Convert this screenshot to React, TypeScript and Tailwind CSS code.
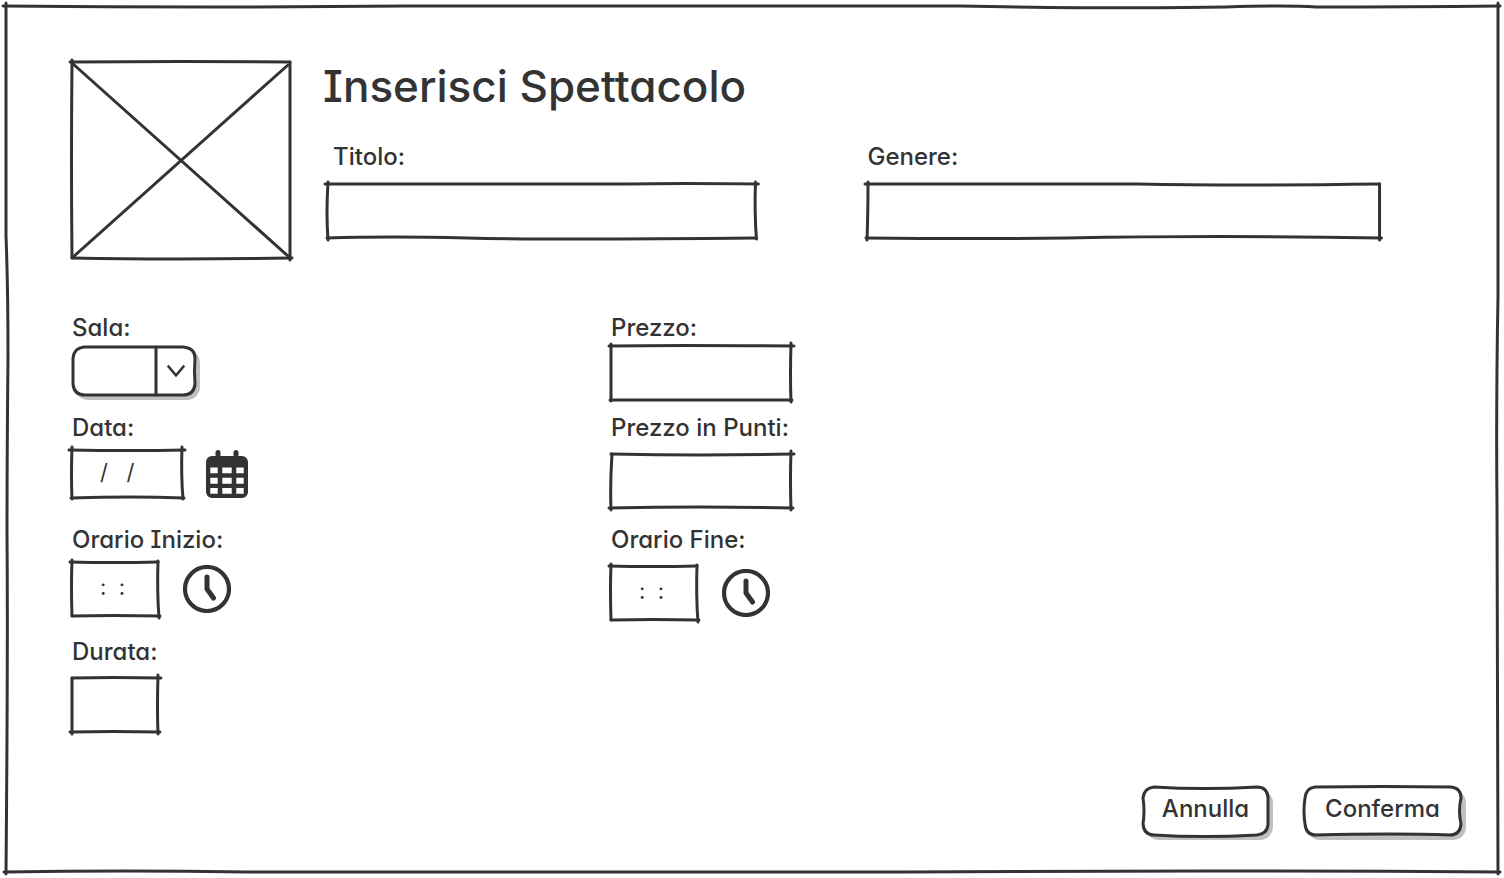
import React from "react";

const INK = "stroke-[#333333]";

function Sketch({ w, h, lines }: { w: number; h: number; lines: string[] }) {
  return (
    <svg
      aria-hidden="true"
      viewBox={`0 0 ${w} ${h}`}
      preserveAspectRatio="none"
      className={`pointer-events-none absolute inset-0 h-full w-full overflow-visible fill-none ${INK} stroke-3`}
      strokeLinecap="round"
      strokeLinejoin="round"
    >
      {lines.map((d) => (
        <path key={d} d={d} vectorEffect="non-scaling-stroke" />
      ))}
    </svg>
  );
}

type FieldProps = {
  id: string;
  label: string;
  w: number;
  h: number;
  lines: string[];
  box: string;
  gap: string;
  labelClass?: string;
  inputClass?: string;
  value?: string;
  children?: React.ReactNode;
};

function Field({ id, label, w, h, lines, box, gap, labelClass = "", inputClass = "px-3 text-2xl", value, children }: FieldProps) {
  return (
    <div>
      <label htmlFor={id} className={`block text-2xl leading-8 font-medium ${labelClass}`}>
        {label}
      </label>
      <div className={`flex items-center gap-6 ${gap}`}>
        <div className={`relative ${box}`}>
          <input id={id} type="text" defaultValue={value} className={`block h-full w-full bg-transparent outline-none ${inputClass}`} />
          <Sketch w={w} h={h} lines={lines} />
        </div>
        {children}
      </div>
    </div>
  );
}

function Clock() {
  return (
    <svg aria-hidden="true" viewBox="0 0 48 48" className={`size-12 fill-none ${INK}`} strokeLinecap="round" strokeLinejoin="round">
      <circle cx="24" cy="24" r="22" strokeWidth="4.2" />
      <path d="M24 12V24L30.5 33" strokeWidth="5" />
    </svg>
  );
}

function Calendar() {
  return (
    <svg aria-hidden="true" viewBox="0 0 42 48" className="h-12 w-[42px] fill-[#333333]">
      <rect x="9.5" y="0" width="5" height="10" rx="2.5" />
      <rect x="27.5" y="0" width="5" height="10" rx="2.5" />
      <path
        fillRule="evenodd"
        d="M6 6H36A6 6 0 0 1 42 12V42A6 6 0 0 1 36 48H6A6 6 0 0 1 0 42V12A6 6 0 0 1 6 6ZM4.300 17.500V23.300H11.700V17.500ZM16.300 17.500V23.300H25.700V17.500ZM30.300 17.500V23.300H37.700V17.500ZM4.300 27.700V33.700H11.700V27.700ZM16.300 27.700V33.700H25.700V27.700ZM30.300 27.700V33.700H37.700V27.700ZM4.300 38V43.700H11.700V38ZM16.300 38V43.700H25.700V38ZM30.300 38V43.700H37.700V38Z"
      />
    </svg>
  );
}

function SketchButton({ w, width, d, children }: { w: number; width: string; d: string; children: string }) {
  return (
    <button type="button" className={`relative h-12 rounded-xl bg-white pb-1 text-2xl leading-8 font-medium shadow-[4px_4px_0_1px_#c0c0c0] ${width}`}>
      <Sketch w={w} h={48} lines={[d]} />
      {children}
    </button>
  );
}

const timeLines = ["M-2 0Q40 1 86 0", "M86 -1Q85 30 87 56", "M0 -2Q-1 24 0 54", "M0 54Q40 53 88 54"];

export default function App() {
  return (
    <div className="flex min-h-screen bg-white p-[6px] font-['Inter',sans-serif] text-[#333333] [font-feature-settings:'cv11','cv08']">
      <main className="relative flex flex-1 flex-col pt-14 pr-[37px] pb-[37px] pl-[66px]">
        <Sketch
          w={1492}
          h={866}
          lines={[
            "M-3 0Q200 2 400 0H955Q1120 3 1220 1Q1280 -1 1310 1Q1400 1 1494 0",
            "M0 -3V230Q2 280 2 350Q1 450 1 530Q2 640 0 868",
            "M1492 -3V290Q1490 400 1491 500Q1492 600 1492 868",
            "M-2 866Q120 864 240 866H900Q1200 864 1494 866",
          ]}
        />
        <form className="flex flex-1 flex-col">
          <header className="flex gap-8 pr-[81px]">
            <div className="relative h-[196px] w-[219px] shrink-0" role="img" aria-label="Locandina">
              <Sketch
                w={219}
                h={196}
                lines={["M-2 0Q110 -1 218 0", "M218 0V198", "M0 -2Q-1 100 0 196", "M0 196Q100 198 220 196", "M0 1L216 194", "M216 3L1 195"]}
              />
            </div>
            <div className="flex-1">
              <h1 className="text-[44px] leading-12 font-medium">Inserisci Spettacolo</h1>
              <div className="mt-[31px] grid grid-cols-[429fr_512fr] gap-x-[111px] pl-1">
                <Field
                  id="titolo" label="Titolo:" w={429} h={54} box="h-[54px] w-full" gap="mt-[11px]" labelClass="pl-[6px]"
                  lines={["M-2 0H300Q350 -1 431 0", "M428 -2Q427 30 429 55", "M1 -2Q-1 30 1 56", "M0 54Q60 52 140 54T429 54"]}
                />
                <Field
                  id="genere" label="Genere:" w={512} h={54} box="h-[54px] w-full" gap="mt-[11px]"
                  lines={["M-2 0H270Q370 2 512 0", "M512 0V56", "M1 -2Q1 30 0 56", "M-1 54Q110 55 200 54Q350 51 514 54"]}
                />
              </div>
            </div>
          </header>
          <div className="mt-[54px] grid grid-cols-[539fr_850fr] grid-rows-[100px_112px_112px_auto]">
            <div>
              <label htmlFor="sala" className="block text-2xl leading-8 font-medium">Sala:</label>
              <div className="relative mt-[3px] h-12 w-[123px] rounded-xl bg-white shadow-[4px_4px_0_1px_#c0c0c0]">
                <select id="sala" className="block h-full w-full appearance-none rounded-xl bg-transparent px-3 outline-none">
                  <option />
                </select>
                <Sketch
                  w={123}
                  h={48}
                  lines={["M12 0H111Q123 1 123 11Q122 24 123 37Q122 48 111 48H13Q2 48 1 37V11Q2 1 12 0Z", "M84 0V48"]}
                />
                <svg
                  aria-hidden="true"
                  viewBox="0 0 18 12"
                  className={`pointer-events-none absolute top-[18px] right-[10px] h-3 w-[18px] fill-none ${INK}`}
                  strokeWidth="2.6"
                  strokeLinecap="round"
                  strokeLinejoin="round"
                >
                  <path d="M1.500 1.500L9 10.500L16.500 1.500" />
                </svg>
              </div>
            </div>
            <Field
              id="prezzo" label="Prezzo:" w={180} h={54} box="h-[54px] w-[180px]" gap="mt-[2px]"
              lines={["M-2 0Q60 -1 183 0", "M180 -3Q179 30 180 56", "M0 -2V55", "M-1 54H181"]}
            />
            <Field
              id="data" label="Data:" w={110} h={48} box="h-12 w-[110px]" gap="mt-[6px]" inputClass="pb-1 pl-7 text-[22px]" value="/   /"
              lines={["M-3 0Q60 1 113 0", "M110 -3Q109 26 111 49", "M0 -3Q-1 26 0 49", "M-1 48Q60 46 112 48"]}
            >
              <Calendar />
            </Field>
            <Field
              id="punti" label="Prezzo in Punti:" w={180} h={54} box="h-[54px] w-[180px]" gap="mt-[10px]"
              lines={["M0 0Q90 2 183 0", "M180 -3Q179 25 180 56", "M1 0Q-1 30 0 56", "M-2 54Q90 52 182 54"]}
            />
            <Field id="inizio" label="Orario Inizio:" w={87} h={54} box="h-[54px] w-[87px]" gap="mt-[6px]" inputClass="pb-1 pl-7 text-[22px]" value=":  :" lines={timeLines}>
              <Clock />
            </Field>
            <Field id="fine" label="Orario Fine:" w={87} h={54} box="h-[54px] w-[87px]" gap="mt-[10px]" inputClass="pb-1 pl-7 text-[22px]" value=":  :" lines={timeLines}>
              <Clock />
            </Field>
            <Field
              id="durata" label="Durata:" w={87} h={54} box="h-[54px] w-[87px]" gap="mt-[10px]"
              lines={["M0 0Q40 -1 89 0", "M86 -3Q85 30 86 56", "M0 0V56", "M-2 54Q40 53 88 54"]}
            />
          </div>
          <div className="mt-auto flex justify-end gap-9">
            <SketchButton w={124} width="w-[125px]" d="M11 0Q60 3 113 0Q123 0 124 10V38Q123 47 113 48Q60 51 11 48Q1 48 0 37Q2 24 0 11Q1 1 11 0Z">Annulla</SketchButton>
            <SketchButton w={157} width="w-[157px]" d="M11 0Q80 -1 147 0Q157 1 157 11Q154 24 157 37Q156 48 146 48Q90 46 12 48Q2 48 1 37Q-1 24 1 11Q2 1 11 0Z">Conferma</SketchButton>
          </div>
        </form>
      </main>
    </div>
  );
}
